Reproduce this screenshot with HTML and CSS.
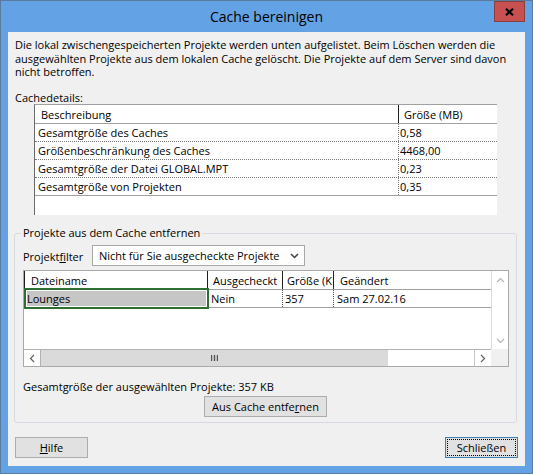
FILE: index.html
```html
<!DOCTYPE html>
<html lang="de">
<head>
<meta charset="utf-8">
<title>Cache bereinigen</title>
<link rel="stylesheet" href="styles.css">
</head>
<body>
<div class="window">
  <div class="titlebar">
    <span class="title">Cache bereinigen</span>
    <button class="close" aria-label="Schließen"><svg width="9" height="8" viewBox="0 0 9 8"><path d="M1 0.8 L8 7.2 M8 0.8 L1 7.2" stroke="#000" stroke-width="2.2" fill="none"/></svg></button>
  </div>
  <div class="content">
    <p class="intro">Die lokal zwischengespeicherten Projekte werden unten aufgelistet. Beim Löschen werden die<br>ausgewählten Projekte aus dem lokalen Cache gelöscht. Die Projekte auf dem Server sind davon<br>nicht betroffen.</p>
    <div class="caption">Cachedetails:</div>
    <div class="details">
      <div class="drow dhead"><div class="c1">Beschreibung</div><div class="c2">Größe (MB)</div></div>
      <div class="drow"><div class="c1">Gesamtgröße des Caches</div><div class="c2">0,58</div></div>
      <div class="drow"><div class="c1">Größenbeschränkung des Caches</div><div class="c2">4468,00</div></div>
      <div class="drow"><div class="c1">Gesamtgröße der Datei GLOBAL.MPT</div><div class="c2">0,23</div></div>
      <div class="drow last"><div class="c1">Gesamtgröße von Projekten</div><div class="c2">0,35</div></div>
    </div>
    <fieldset class="group">
      <legend>Projekte aus dem Cache entfernen</legend>
      <div class="filter">
        <span class="filter-label">Projekt<u>f</u>ilter</span>
        <div class="combo">
          <span>Nicht für Sie ausgecheckte Projekte</span>
          <svg width="9" height="6" viewBox="0 0 9 6"><path d="M1 1 L4.5 4.5 L8 1" stroke="#404040" stroke-width="1.5" fill="none"/></svg>
        </div>
      </div>
      <div class="listview">
        <div class="lv-main">
          <div class="lv-head">
            <div class="col1 first">Dateiname</div>
            <div class="col2">Ausgecheckt</div>
            <div class="col3">Größe (K</div>
            <div class="col4">Geändert</div>
          </div>
          <div class="lv-row">
            <div class="col1 sel">Lounges</div>
            <div class="col2 dot">Nein</div>
            <div class="col3 dot">357</div>
            <div class="col4">Sam 27.02.16</div>
          </div>
        </div>
        <div class="vscroll">
          <div class="arrow"><svg width="9" height="6" viewBox="0 0 9 6"><path d="M1 5 L4.5 1.5 L8 5" stroke="#b5b5b5" stroke-width="1.2" fill="none"/></svg></div>
          <div class="arrow"><svg width="9" height="6" viewBox="0 0 9 6"><path d="M1 1 L4.5 4.5 L8 1" stroke="#b5b5b5" stroke-width="1.2" fill="none"/></svg></div>
        </div>
        <div class="hscroll">
          <div class="hbtn left"><svg width="6" height="9" viewBox="0 0 6 9"><path d="M5 1 L1.5 4.5 L5 8" stroke="#606060" stroke-width="1.2" fill="none"/></svg></div>
          <div class="thumb"><svg width="7" height="6" viewBox="0 0 7 6"><path d="M0.5 0 V6 M3.5 0 V6 M6.5 0 V6" stroke="#555" stroke-width="1.4" fill="none"/></svg></div>
          <div class="track"></div>
          <div class="hbtn right"><svg width="6" height="9" viewBox="0 0 6 9"><path d="M1 1 L4.5 4.5 L1 8" stroke="#606060" stroke-width="1.2" fill="none"/></svg></div>
        </div>
        <div class="corner"></div>
      </div>
      <div class="total">Gesamtgröße der ausgewählten Projekte: 357 KB</div>
      <div class="center"><button class="btn wide">Aus Cache entfe<u>r</u>nen</button></div>
    </fieldset>
    <div class="footer">
      <button class="btn"><u>H</u>ilfe</button>
      <button class="btn default">Schließen</button>
    </div>
  </div>
</div>
</body>
</html>
```
FILE: styles.css
```css
* { box-sizing: border-box; }
html, body { margin: 0; padding: 0; }
body {
  width: 533px;
  height: 474px;
  overflow: hidden;
  font-family: "Open Sans", "Noto Sans", sans-serif;
  font-size: 11px;
  color: #000;
  background: #fff;
}
.window {
  width: 533px;
  height: 474px;
  border: 1px solid #5b7a9c;
  background: #63a2e4;
  padding: 0 7px 7px;
  display: flex;
  flex-direction: column;
}
.titlebar {
  height: 31px;
  display: grid;
}
.titlebar > * { grid-area: 1 / 1; }
.title {
  justify-self: center;
  align-self: center;
  font-size: 14px;
  line-height: 30px;
  color: #000;
}
.close {
  justify-self: end;
  align-self: start;
  width: 31px;
  height: 21px;
  padding: 0;
  background: #c75050;
  border: 1px solid #8a3f3f;
  display: flex;
  align-items: center;
  justify-content: center;
}
.content {
  flex: 1;
  background: #f0f0f0;
  display: flex;
  flex-direction: column;
  padding: 6px 0 8px;
}
.intro {
  margin: 0 0 0 7px;
  line-height: 13.5px;
}
.caption {
  margin: 12px 0 0 7px;
  line-height: 13.5px;
}
.details {
  margin-left: 26px;
  width: 463px;
  height: 111px;
  flex: none;
  background: #fff;
  border-top: 1px solid #a0a0a0;
  border-left: 1px solid #6b6b6b;
}
.drow {
  display: flex;
  height: 18px;
  border-bottom: 1px dotted #7a7a7a;
  line-height: 17px;
  white-space: nowrap;
}
.drow .c1 {
  width: 364px;
  border-right: 1px dotted #7a7a7a;
  padding-left: 3px;
}
.drow .c2 { padding-left: 1px; }
.drow.dhead {
  height: 19px;
  border-bottom: 1px solid #a0a0a0;
  line-height: 18px;
}
.dhead .c1 { border-right: 1px solid #1e1e1e; padding-left: 6px; padding-top: 1px; }
.dhead .c2 { padding-left: 5px; padding-top: 1px; }
.drow.last { border-bottom: 1px solid #a0a0a0; }

.group {
  margin: 11px 0 0 6px;
  width: 503px;
  height: 197px;
  flex: none;
  min-width: 0;
  border: 1px solid #d5dbe1;
  border-radius: 3px;
  padding: 5px 8px 4px;
}
.group legend {
  padding: 0 2px;
  margin-left: -2px;
  line-height: 14px;
}
.filter {
  display: flex;
  align-items: center;
  height: 21px;
}
.filter-label {
  width: 69px;
  padding-top: 2px;
}
.combo {
  width: 213px;
  height: 21px;
  border: 1px solid #a8a8a8;
  background: #fff;
  display: flex;
  align-items: center;
  justify-content: space-between;
  padding: 0 5px 0 6px;
  font-size: 11px;
}
.listview {
  margin-top: 4px;
  width: 486px;
  height: 97px;
  display: grid;
  grid-template-columns: 1fr 17px;
  grid-template-rows: 1fr 17px;
  border: 1px solid #a9a9a9;
  background: #fff;
}
.lv-main { overflow: hidden; }
.lv-head {
  display: flex;
  height: 19px;
  border-bottom: 1px solid #a0a0a0;
}
.lv-head > div {
  flex: none;
  border-right: 1px solid #1f1f1f;
  padding: 3px 0 0 5px;
  line-height: 14px;
  white-space: nowrap;
  overflow: hidden;
}
.lv-head > .first { box-shadow: inset 1px 0 0 #1f1f1f; padding-left: 7px; }
.lv-head > .col3 { padding-left: 4px; }
.lv-head > .col4 { flex: 1; border-right: 0; padding-left: 6px; }
.col1 { width: 184px; }
.col2 { width: 75px; }
.col3 { width: 51px; }
.lv-row {
  display: flex;
  height: 18px;
  border-bottom: 1px solid #a0a0a0;
}
.lv-row > div {
  flex: none;
  line-height: 17px;
  padding-left: 3px;
  white-space: nowrap;
}
.lv-row > .col3 { padding-left: 2px; }
.lv-row > .col4 { flex: 1; }
.lv-row > .dot { border-right: 1px dotted #555; }
.sel {
  position: relative;
  background: #c6c6c6;
}
.sel::after {
  content: "";
  position: absolute;
  left: 0;
  top: -2px;
  right: -1px;
  bottom: -2px;
  border: 2px solid #2e6e33;
  box-shadow: inset 0 0 0 1px #fff;
}
.vscroll {
  border-left: 1px solid #dadada;
  background: #fff;
  display: flex;
  flex-direction: column;
  justify-content: space-between;
}
.arrow {
  height: 17px;
  display: flex;
  align-items: center;
  justify-content: center;
}
.hscroll {
  display: flex;
  border-top: 1px solid #b3b3b3;
}
.hbtn {
  width: 17px;
  flex: none;
  background: #fff;
  display: flex;
  align-items: center;
  justify-content: center;
}
.hbtn.left { border-right: 1px solid #b3b3b3; }
.hbtn.right { border-left: 1px solid #c8c8c8; }
.thumb {
  width: 347px;
  flex: none;
  background: #dadada;
  display: flex;
  align-items: center;
  justify-content: center;
}
.track { flex: 1; background: #fff; }
.corner { background: #f0f0f0; }
.total {
  margin-top: 12px;
  line-height: 15px;
}
.center {
  margin-top: 2px;
  display: flex;
  justify-content: center;
}
.btn {
  font: inherit;
  color: #000;
  height: 21px;
  width: 73px;
  padding: 0;
  background: #e1e1e1;
  border: 1px solid #adadad;
  line-height: 19px;
}
.btn.wide { width: 123px; }
.btn.default {
  border-color: #3c7fb1;
  outline: 1px dotted #000;
  outline-offset: -3px;
}
.footer {
  margin-top: auto;
  display: flex;
  justify-content: space-between;
  padding: 0 7px;
}
```
